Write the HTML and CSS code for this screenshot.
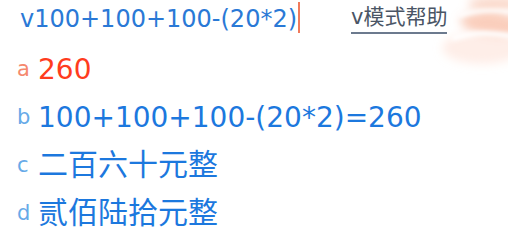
FILE: index.html
```html
<!DOCTYPE html>
<html lang="zh-CN">
<head>
<meta charset="utf-8">
<title>计算器</title>
<link rel="stylesheet" href="styles.css">
</head>
<body>
<div class="panel">
  <svg class="deco" width="100" height="90" viewBox="0 0 100 90" aria-hidden="true">
    <defs>
      <filter id="soft" x="-50%" y="-50%" width="200%" height="200%"><feGaussianBlur stdDeviation="5"/></filter>
      <filter id="soft2" x="-50%" y="-50%" width="200%" height="200%"><feGaussianBlur stdDeviation="2"/></filter>
    </defs>
    <g filter="url(#soft)">
      <ellipse cx="88" cy="4" rx="28" ry="8" fill="#f8bea6" opacity="0.55"/>
      <ellipse cx="86" cy="24" rx="34" ry="11" fill="#f6ad90" opacity="0.6" transform="rotate(6 86 24)"/>
      <ellipse cx="74" cy="48" rx="40" ry="16" fill="#fcd9cb" opacity="0.45"/>
    </g>
    <g filter="url(#soft2)" fill="none" stroke="#ffffff" stroke-linecap="round">
      <path d="M52 15 Q74 8 102 12" stroke-width="4"/>
      <path d="M46 38 Q70 30 102 36" stroke-width="5"/>
    </g>
  </svg>
  <div class="top">
    <div class="input">v100+100+100-(20*2)<span class="caret"></span></div>
    <span class="help">v模式帮助</span>
  </div>
  <div class="rows">
    <div class="row"><span class="label label-a">a</span><span class="value red">260</span></div>
    <div class="row"><span class="label">b</span><span class="value">100+100+100-(20*2)=260</span></div>
    <div class="row"><span class="label">c</span><span class="value cjk">二百六十元整</span></div>
    <div class="row"><span class="label">d</span><span class="value cjk">贰佰陆拾元整</span></div>
  </div>
</div>
</body>
</html>
```

FILE: styles.css
```css
html, body {
  margin: 0;
  padding: 0;
  background: #ffffff;
}
.panel {
  position: relative;
  width: 508px;
  height: 245px;
  overflow: hidden;
  font-family: "DejaVu Sans", "Noto Sans CJK SC", sans-serif;
}
.deco {
  position: absolute;
  top: 0;
  right: 0;
  pointer-events: none;
}
.top {
  position: relative;
  display: flex;
  align-items: flex-start;
  height: 37px;
}
.input {
  box-sizing: border-box;
  width: 351px;
  padding: 1px 0 0 20px;
  font-size: 24px;
  line-height: 36px;
  color: #2a79d6;
  white-space: nowrap;
}
.caret {
  display: inline-block;
  width: 2px;
  height: 31px;
  margin-left: 1px;
  background: #f07a5c;
  vertical-align: -6px;
}
.help {
  margin-top: 5px;
  padding-bottom: 3px;
  font-family: "DejaVu Sans", "Noto Sans CJK SC", sans-serif;
  font-size: 21px;
  line-height: 24px;
  color: #4a5565;
  border-bottom: 2px solid #6c7a8e;
}
.rows {
  position: relative;
  padding-top: 9px;
}
.row {
  padding-left: 17px;
  font-size: 28px;
  line-height: 48px;
  height: 48px;
  white-space: nowrap;
}
.label {
  display: inline-block;
  width: 21px;
  font-size: 21px;
  line-height: 20px;
  color: #67aae8;
  vertical-align: 3px;
}
.label-a {
  color: #f5896e;
}
.value {
  color: #1c78de;
}
.value.red {
  color: #ff3c1e;
}
.value.cjk {
  font-family: "Noto Sans CJK SC", sans-serif;
  font-size: 30px;
  line-height: 30px;
}
```
